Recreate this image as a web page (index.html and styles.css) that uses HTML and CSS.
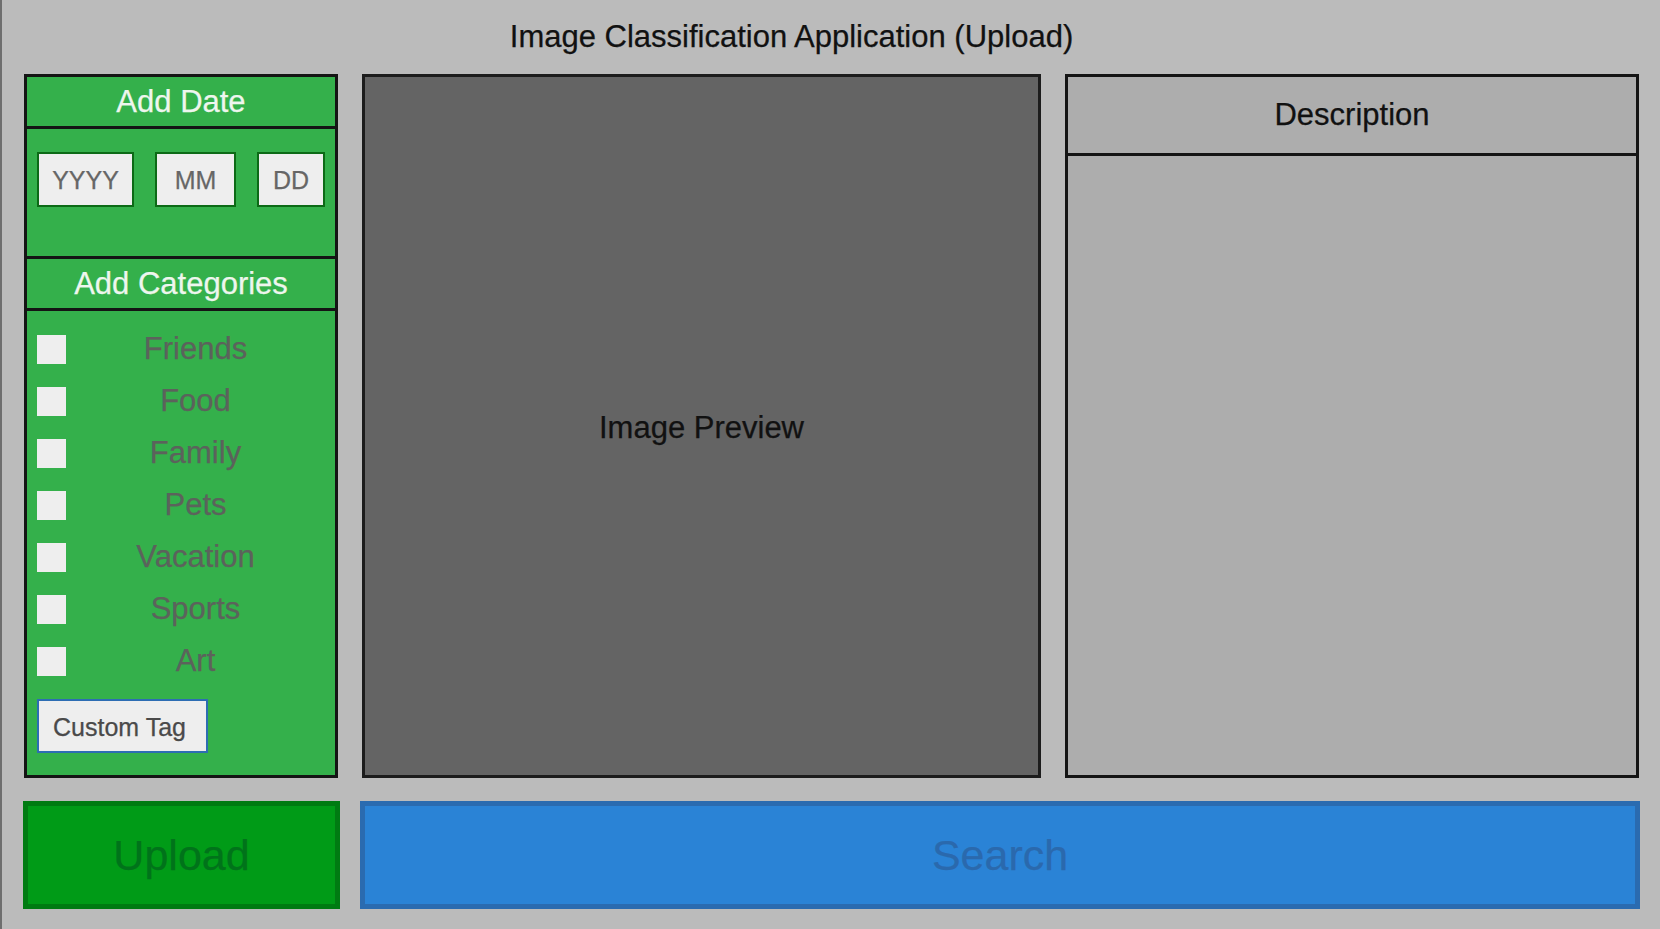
FILE: index.html
```html
<!DOCTYPE html>
<html lang="en">
  <head>
    <meta charset="UTF-8" />
    <meta name="viewport" content="width=device-width, initial-scale=1.0" />
    <title>Image Classification Application (Upload)</title>

    <link rel="stylesheet" href="styles.css">
  </head>
  <body>
    <h1 class="title">Image Classification Application (Upload)</h1>

    <main class="main">
      <aside class="sidebar">
        <div class="section-head">Add Date</div>
        <div class="date-row">
          <input type="text" class="date yyyy" placeholder="YYYY" />
          <input type="text" class="date mm" placeholder="MM" />
          <input type="text" class="date dd" placeholder="DD" />
        </div>

        <div class="section-head">Add Categories</div>
        <div class="categories">
          <label class="cat"><input type="checkbox" /><span>Friends</span></label>
          <label class="cat"><input type="checkbox" /><span>Food</span></label>
          <label class="cat"><input type="checkbox" /><span>Family</span></label>
          <label class="cat"><input type="checkbox" /><span>Pets</span></label>
          <label class="cat"><input type="checkbox" /><span>Vacation</span></label>
          <label class="cat"><input type="checkbox" /><span>Sports</span></label>
          <label class="cat"><input type="checkbox" /><span>Art</span></label>
          <input type="text" class="custom-tag" placeholder="Custom Tag" />
        </div>
      </aside>

      <section class="preview">Image Preview</section>

      <section class="description">
        <div class="description-head">Description</div>
        <div class="description-body"></div>
      </section>
    </main>

    <div class="actions">
      <button class="upload">Upload</button>
      <button class="search">Search</button>
    </div>
  </body>
</html>
```

FILE: styles.css
```css
html {
  font-family: "Liberation Sans", Arial, sans-serif;
  background: #bbbbbb;
  -webkit-text-stroke: 0.25px;
}

body {
  margin: 0;
  height: 929px;
  box-sizing: border-box;
  border-left: 2px solid #6e6e6e;
  overflow: hidden;
}

/* title */
.title {
  margin: 0;
  height: 74px;
  display: flex;
  align-items: center;
  justify-content: center;
  padding-right: 79px;
  font-size: 31px;
  font-weight: normal;
  color: #111111;
}

/* main row */
.main {
  display: grid;
  grid-template-columns: 314px 679px 574px;
  column-gap: 24px;
  height: 704px;
  padding-left: 22px;
}

.sidebar {
  display: flex;
  flex-direction: column;
  background: #34b04b;
  border: 3px solid #141414;
}

.section-head {
  height: 49px;
  display: flex;
  align-items: center;
  justify-content: center;
  font-size: 31px;
  color: #eef6ee;
  border-bottom: 3px solid #141414;
}

.date-row {
  display: flex;
  justify-content: space-between;
  height: 104px;
  padding: 23px 10px 0 10px;
  border-bottom: 3px solid #141414;
}

input.date {
  box-sizing: border-box;
  height: 55px;
  margin: 0;
  padding: 2px 0 0 0;
  border: 2px solid #0c6a16;
  background: #eeeeee;
  font-family: inherit;
  font-size: 25px;
  text-align: center;
}
input.date.yyyy {
  width: 97px;
}
input.date.mm {
  width: 81px;
}
input.date.dd {
  width: 68px;
}

input::placeholder {
  color: #666666;
  opacity: 1;
}

.categories {
  flex: 1;
  display: flex;
  flex-direction: column;
  align-items: flex-start;
  padding: 12px 10px 0 10px;
}

.cat {
  display: flex;
  align-items: center;
  width: 100%;
  height: 52px;
}
.cat input {
  appearance: none;
  width: 29px;
  height: 29px;
  margin: 0;
  border: 0;
  background: #eeeeee;
}
.cat span {
  flex: 1;
  text-align: center;
  font-size: 31px;
  color: #5c625c;
}

.custom-tag {
  box-sizing: border-box;
  width: 171px;
  height: 54px;
  margin: 12px 0 0 0;
  padding: 2px 0 0 14px;
  border: 2px solid #2d6db3;
  background: #eeeeee;
  font-family: inherit;
  font-size: 25px;
}
.custom-tag::placeholder {
  color: #4a4a4a;
}

.preview {
  display: flex;
  align-items: center;
  justify-content: center;
  padding-top: 4px;
  background: #646464;
  border: 3px solid #1c1c1c;
  font-size: 31px;
  color: #111111;
}

.description {
  display: flex;
  flex-direction: column;
  background: #adadad;
  border: 3px solid #141414;
}
.description-head {
  height: 76px;
  display: flex;
  align-items: center;
  justify-content: center;
  font-size: 31px;
  color: #111111;
  border-bottom: 3px solid #141414;
}
.description-body {
  flex: 1;
}

/* buttons */
.actions {
  display: grid;
  grid-template-columns: 317px 1280px;
  column-gap: 20px;
  height: 108px;
  margin-top: 23px;
  padding-left: 21px;
}

.actions button {
  margin: 0;
  font-family: inherit;
  font-size: 43px;
  cursor: pointer;
}

button.upload {
  background: #009b17;
  border: 5px solid #007b12;
  color: #00731a;
}

button.search {
  background: #2a83d6;
  border: 5px solid #2a6bb0;
  color: #2a69ad;
}
```
